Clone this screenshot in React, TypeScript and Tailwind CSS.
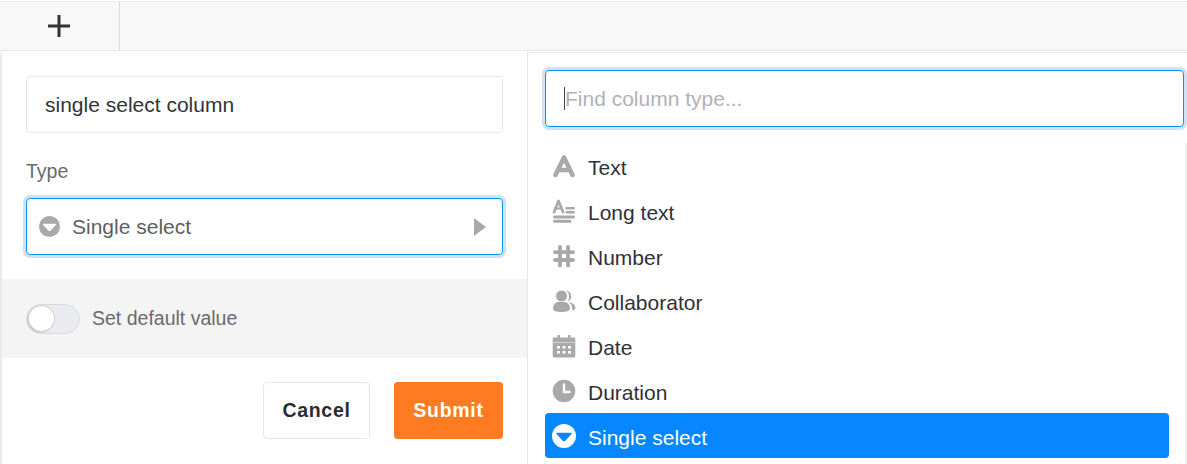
import React from 'react';

const font = "[font-family:'Liberation_Sans',Arial,sans-serif]";

function SelectIcon({ className }: { className: string }) {
  return (
    <svg viewBox="1.5 1.5 21 21" className={className}>
      <path
        fillRule="evenodd"
        d="M12 1.500a10.500 10.500 0 1 1 0 21a10.500 10.500 0 0 1 0-21ZM5.800 9.200c-.5 0-.8.6-.4 1l5.700 6.100c.5.5 1.300.5 1.800 0l5.700-6.100c.4-.4.1-1-.4-1Z"
        fill="currentColor"
      />
    </svg>
  );
}

function TextIcon() {
  return (
    <svg viewBox="0 0 24 24" className="w-6 h-6 text-[#a9a9a9]" fill="none" stroke="currentColor" strokeWidth="4.600" strokeLinecap="round" strokeLinejoin="round">
      <path d="M3.500 21 12 3.500 20.500 21M7 16h10" />
    </svg>
  );
}

function LongTextIcon() {
  return (
    <svg viewBox="0 0 24 24" className="w-6 h-6 text-[#a9a9a9]">
      <path d="M2 13 6.500 2 11 13" fill="none" stroke="currentColor" strokeWidth="2.800" strokeLinecap="round" strokeLinejoin="round" />
      <path d="M3.500 9.500h6" stroke="currentColor" strokeWidth="2.200" />
      <rect x="13.500" y="8" width="9.500" height="2.600" rx="1.300" fill="currentColor" />
      <rect x="13.500" y="12" width="9.500" height="2.600" rx="1.300" fill="currentColor" />
      <rect x="1" y="16.500" width="22" height="3" rx="1.500" fill="currentColor" />
      <rect x="1" y="20.800" width="18.500" height="3" rx="1.500" fill="currentColor" />
    </svg>
  );
}

function NumberIcon() {
  return (
    <svg viewBox="0 0 24 24" className="w-6 h-6 text-[#a9a9a9]" fill="none" stroke="currentColor" strokeWidth="3.800" strokeLinecap="round">
      <path d="M8 3v18.500M16 3v18.500M3 8.200h18M3 16h18" />
    </svg>
  );
}

function CollaboratorIcon() {
  return (
    <svg viewBox="0 0 24 24" className="w-6 h-6 text-[#a9a9a9]" fill="currentColor">
      <circle cx="9.500" cy="7" r="5.500" />
      <path d="M14 1.600a5.600 5.600 0 0 1 1.500 10.800a7.400 7.400 0 0 0-1.500-10.800Z" />
      <path d="M1 19.500c0-4 3-6.500 5.300-6.500h6.400c2.300 0 5.300 2.500 5.300 6.500c0 2.400-3.800 3.500-8.500 3.500S1 21.900 1 19.500Z" />
      <path d="M16.500 13c3.500.2 7 2.800 7 5.700c0 1.400-1.500 2.400-4 2.800c.5-.7.7-1.400.7-2.300c0-2.400-1.500-4.700-3.700-6.200Z" />
    </svg>
  );
}

function DateIcon() {
  const dots = [
    [5, 12], [10.500, 12], [16, 12], [5, 17], [10.500, 17], [16, 17],
  ];
  return (
    <svg viewBox="0 0 24 24" className="w-6 h-6 text-[#a9a9a9]">
      <path d="M5.500 1h2.500v2.500h8V1h2.500v2.500H22c.8 0 1.300.7 1.300 1.500v17c0 .8-.5 1.500-1.300 1.500H2c-.8 0-1.300-.7-1.300-1.500V5c0-.8.5-1.500 1.300-1.500h3.500Z" fill="currentColor" />
      <rect x="1" y="8" width="22" height="1" fill="#fff" opacity=".5" />
      {dots.map(([x, y]) => (
        <rect key={`${x}-${y}`} x={x} y={y} width="3" height="2.600" fill="#fff" />
      ))}
    </svg>
  );
}

function DurationIcon() {
  return (
    <svg viewBox="0 0 24 24" className="w-6 h-6 text-[#a9a9a9]">
      <circle cx="12" cy="12" r="11.300" fill="currentColor" />
      <path d="M12 5.500v7.500h5.500" fill="none" stroke="#fff" strokeWidth="2.400" strokeLinecap="round" strokeLinejoin="round" />
    </svg>
  );
}

const columnTypes = [
  { label: 'Text', icon: <TextIcon /> },
  { label: 'Long text', icon: <LongTextIcon /> },
  { label: 'Number', icon: <NumberIcon /> },
  { label: 'Collaborator', icon: <CollaboratorIcon /> },
  { label: 'Date', icon: <DateIcon /> },
  { label: 'Duration', icon: <DurationIcon /> },
];

export default function App() {
  return (
    <div className={`w-[1187px] h-[464px] overflow-hidden bg-white flex flex-col ${font}`}>
      {/* table header strip */}
      <div className="mt-px h-[50px] shrink-0 flex bg-[#f8f8f8] border-t border-[#ececec] border-b border-b-[#e6e8eb]">
        <div className="w-[120px] flex items-center justify-center pr-px pb-px border-r border-[#d9d9d9]">
          <svg viewBox="0 0 22 22" className="w-[22px] h-[22px] text-[#333]" fill="none" stroke="currentColor" strokeWidth="3">
            <path d="M11 0v22M0 11h22" />
          </svg>
        </div>
      </div>

      <div className="flex-1 flex min-h-0">
        {/* column form */}
        <div className="w-[528px] shrink-0 flex flex-col bg-white border-l-2 border-r border-l-[#e8ebf1] border-r-[#e3e6ec] rounded-tl-[4px]">
          <div className="pt-[25px] pl-[24px] pr-[24px]">
            <div className="h-[57px] flex items-center pl-[18px] border border-[#e3e6ec] rounded-[4px] text-[21px] text-[#333437]">
              single select column
            </div>
            <div className="mt-[27px] h-[24px] flex items-center text-[19.500px] text-[#6a6b6e]">Type</div>
            <div className="mt-[14px] h-[57px] flex items-center pl-[11.500px] pr-[16px] border-[1.500px] border-[#0a94f2] rounded-[4px] shadow-[0_0_0_3px_#cfe1f5] text-[21px] text-[#5e5f62]">
              <SelectIcon className="w-[21px] h-[21px] text-[#a9a9a9]" />
              <span className="ml-[12.500px] flex-1">Single select</span>
              <span className="w-0 h-0 border-y-[9px] border-y-transparent border-l-[12px] border-l-[#a9a9a9]" />
            </div>
          </div>

          <div className="mt-[24px] h-[79px] shrink-0 flex items-center pl-[24px] bg-[#f4f4f4]">
            <div className="w-[54px] h-[30px] flex items-center pl-[1.500px] rounded-full bg-[#e9ebf0] border-[1.500px] border-[#d8dbe2]">
              <span className="w-[25px] h-[25px] rounded-full bg-white shadow-[0_0_0_1px_#d0d0d0,-1px_1px_2px_rgba(0,0,0,0.3)]" />
            </div>
            <span className="ml-[12px] text-[19.500px] text-[#6a6b6e]">Set default value</span>
          </div>

          <div className="mt-[24px] pr-[24px] flex justify-end gap-[24px]">
            <button className="w-[107px] h-[57px] flex items-center justify-center border border-[#e3e6ec] rounded-[4px] bg-white text-[19.500px] font-bold tracking-[0.700px] text-[#2b2c2f]">
              Cancel
            </button>
            <button className="w-[109px] h-[57px] flex items-center justify-center rounded-[4px] bg-[#ff7b22] text-[19.500px] font-bold tracking-[0.700px] text-white">
              Submit
            </button>
          </div>
        </div>

        {/* column type picker */}
        <div className="flex-1 flex flex-col mt-px bg-white border-t border-[#e6e8eb] rounded-tl-[4px]">
          <div className="pt-[17px] pl-[17px] pr-[3px]">
            <div className="h-[57px] flex items-center pl-[18px] border-[1.500px] border-[#0a94f2] rounded-[4px] shadow-[0_0_0_3px_#cfe1f5] text-[21px] text-[#b1b2b5]">
              <span className="w-px h-[23px] bg-[#444]" />
              <span>Find column type...</span>
            </div>
          </div>

          <div className="mt-[16px] flex-1 flex min-h-0">
            <ul className="flex-1 pl-[17px] pr-[16px]">
              {columnTypes.map((t) => (
                <li key={t.label} className="h-[45px] flex items-center pl-[7px] text-[21px] text-[#303134]">
                  {t.icon}
                  <span className="ml-[12px] pt-[4px]">{t.label}</span>
                </li>
              ))}
              <li className="h-[45px] flex items-center pl-[7px] rounded-[4px] bg-[#0686ff] text-[21px] text-white">
                <SelectIcon className="w-6 h-6 text-white" />
                <span className="ml-[12px] pt-[4px]">Single select</span>
              </li>
            </ul>
            <div className="w-[2px] bg-[#f1f1f1]" />
          </div>
        </div>
      </div>
    </div>
  );
}
